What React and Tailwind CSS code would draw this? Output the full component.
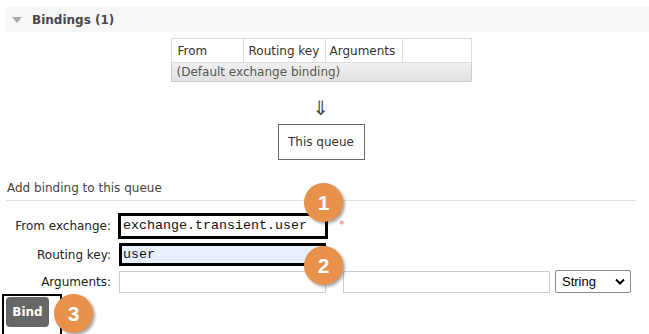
import React from "react";

function Badge({ n, className }) {
  return (
    <div
      className={
        "absolute w-[39px] h-[39px] rounded-full bg-[#e8914a] text-white flex items-center justify-center text-[21px] font-bold shadow-[2px_2px_3px_rgba(0,0,0,0.35)] " +
        className
      }
      style={{ fontFamily: "'Liberation Sans', Arial, sans-serif" }}
    >
      {n}
    </div>
  );
}

export default function App() {
  return (
    <div
      className="relative w-[649px] h-[334px] overflow-hidden bg-white text-[12px] text-[#484848]"
      style={{ fontFamily: "'DejaVu Sans', Verdana, sans-serif" }}
    >
      {/* Header */}
      <div className="ml-[6px] mt-[7px] h-[25px] bg-[#f7f7f7] flex items-center">
        <svg width="10" height="6" viewBox="0 0 10 6" className="ml-[6px] mr-[10px]">
          <path d="M0 0 L10 0 L5 6 Z" fill="#aaaaaa" />
        </svg>
        <span className="font-bold text-[12px] text-[#484848]">Bindings (1)</span>
      </div>

      <div className="ml-[6px] w-[630px] flex flex-col items-center">
        {/* Table */}
        <table className="mt-[6px] w-[301px] table-fixed border-collapse border border-[#cccccc] text-[12px] whitespace-nowrap">
          <thead>
            <tr className="h-[24px] bg-white">
              <th className="w-[72px] h-[24px] p-0 pl-[6px] border border-[#dddddd] text-left font-normal text-[#333]">From</th>
              <th className="w-[82px] h-[24px] p-0 pl-[5px] border border-[#dddddd] text-left font-normal text-[#333]">Routing key</th>
              <th className="w-[77px] h-[24px] p-0 pl-[4px] border border-[#dddddd] text-left font-normal text-[#333]">Arguments</th>
              <th className="h-[24px] p-0 border border-[#dddddd]"></th>
            </tr>
          </thead>
          <tbody>
            <tr className="bg-gradient-to-b from-[#f0f0f0] to-[#e0e0e0]">
              <td colSpan={4} className="h-[19px] p-0 pl-[5px] text-[#555] leading-[18px]">
                (Default exchange binding)
              </td>
            </tr>
          </tbody>
        </table>

        {/* Arrow */}
        <div className="mt-[14px] h-[24px] text-[20px] leading-[24px] text-[#444]">⇓</div>

        {/* This queue */}
        <div className="mt-[4px] w-[87px] h-[36px] border border-[#666] flex items-center justify-center text-[12px] text-[#333]">
          This queue
        </div>
      </div>

      {/* Add binding */}
      <div className="ml-[6px] w-[630px] mt-[21px] pb-[4px] border-b border-[#e0e0e0] text-[12px] text-[#444] pl-[1px] leading-[15px]">
        Add binding to this queue
      </div>

      {/* Form */}
      <div className="relative ml-[6px] mt-[12px] flex flex-col">
        <div className="flex items-center h-[26px]">
          <div className="w-[105px] text-right text-[12px] text-[#222]">From exchange:</div>
          <div className="ml-[7px] w-[210px] h-[26px] border-[3px] border-black bg-white flex items-center pl-[2px] text-[13.33px] text-[#111]"
            style={{ fontFamily: "'Liberation Mono', 'Courier New', monospace" }}>
            exchange.transient.user
          </div>
          <span className="ml-[11px] -mt-[2px] text-[#f08080] text-[11px]">*</span>
        </div>
        <div className="flex items-center h-[23px] mt-[4px]">
          <div className="w-[105px] text-right text-[12px] text-[#222]">Routing key:</div>
          <div className="ml-[8px] w-[207px] h-[23px] border-[3px] border-black bg-[#e8f0fe] flex items-center pl-[1px] text-[13.33px] text-[#111]"
            style={{ fontFamily: "'Liberation Mono', 'Courier New', monospace" }}>
            user
          </div>
        </div>
        <div className="flex items-center h-[23px] mt-[4px]">
          <div className="w-[105px] text-right text-[12px] text-[#222]">Arguments:</div>
          <div className="ml-[8px] w-[207px] h-[22px] border border-[#cccccc] bg-white"></div>
          <div className="ml-[17px] w-[207px] h-[22px] border border-[#cccccc] bg-white"></div>
          <div className="ml-[5px] w-[76px] h-[23px] border border-[#888] rounded-[2px] bg-white flex items-center justify-between pl-[6px] pr-[5px] text-[13px] text-black"
            style={{ fontFamily: "'Liberation Sans', Arial, sans-serif" }}>
            <span>String</span>
            <svg width="10" height="7" viewBox="0 0 10 7">
              <path d="M1 1.5 L5 5.5 L9 1.5" stroke="black" strokeWidth="2" fill="none" />
            </svg>
          </div>
        </div>
      </div>

      {/* Bind */}
      <div className="ml-[2px] mt-[1px] w-[60px] h-[44px] border-[2px] border-black pl-[2px] pt-[1px]">
        <div className="w-[43px] h-[30px] rounded-[4px] bg-[#666666] text-white font-bold text-[12px] flex items-center justify-center">
          Bind
        </div>
      </div>

      <Badge n="1" className="left-[304px] top-[183px]" />
      <Badge n="2" className="left-[304px] top-[246px]" />
      <Badge n="3" className="left-[54px] top-[294px]" />
    </div>
  );
}
